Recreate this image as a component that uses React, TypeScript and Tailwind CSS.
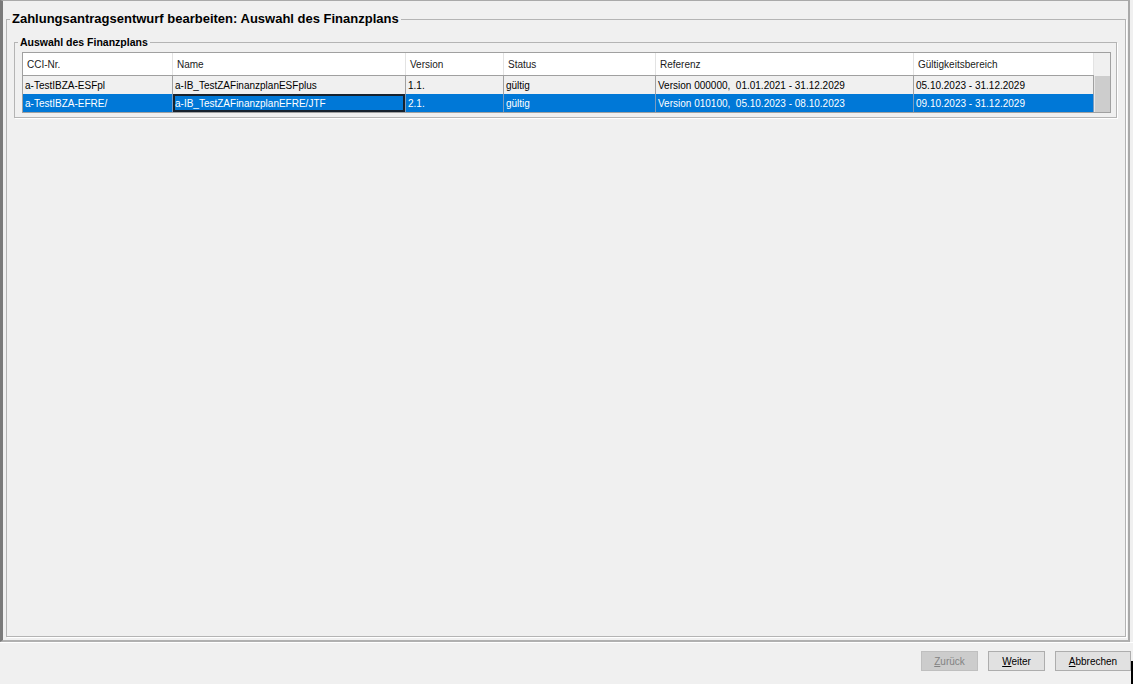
const font = "font-['Liberation_Sans',Arial,sans-serif]";

const columns = ["CCI-Nr.", "Name", "Version", "Status", "Referenz", "Gültigkeitsbereich"];

const rows = [
  ["a-TestIBZA-ESFpl", "a-IB_TestZAFinanzplanESFplus", "1.1.", "gültig", "Version 000000,  01.01.2021 - 31.12.2029", "05.10.2023 - 31.12.2029"],
  ["a-TestIBZA-EFRE/", "a-IB_TestZAFinanzplanEFRE/JTF", "2.1.", "gültig", "Version 010100,  05.10.2023 - 08.10.2023", "09.10.2023 - 31.12.2029"],
];

const gridCols = "grid grid-cols-[150px_233px_98px_152px_258px_180px]";

function FinanzplanTable() {
  return (
    <div className="flex w-[1089px] border border-[#a0a0a0] bg-white">
      <div className="flex flex-col">
        <div className={`${gridCols} h-[23px] border-b border-[#a0a0a0] bg-white`}>
          {columns.map((c) => (
            <div key={c} className="flex items-center border-r border-[#e3e3e3] pl-[4px] text-[10px] text-[#1a1a1a]">
              {c}
            </div>
          ))}
        </div>
        {rows.map((r, i) => {
          const selected = i === 1;
          return (
            <div
              key={i}
              className={`${gridCols} h-[18px] ${selected ? "bg-[#0078d7] text-white" : "bg-[#f0f0f0] text-black"}`}
            >
              {r.map((cell, j) => (
                <div
                  key={j}
                  className={`flex items-center whitespace-pre pl-[2px] text-[10px] border-r ${
                    selected ? "border-[#7a9cc0]" : "border-[#a0a0a0]"
                  } ${selected && j === 1 ? "shadow-[inset_0_0_0_2px_#17222e]" : ""}`}
                >
                  {cell}
                </div>
              ))}
            </div>
          );
        })}
      </div>
      <div className="flex w-[16px] flex-col bg-[#f0f0f0]">
        <div className="h-[23px] border-b border-[#f0f0f0]" />
        <div className="flex-1 bg-[#cdcdcd] border-l border-[#e6e6e6]" />
      </div>
    </div>
  );
}

function Button({ label, mn, disabled }: { label: string; mn: number; disabled?: boolean }) {
  return (
    <button
      className={`flex h-[20px] items-center justify-center border text-[10px] ${
        disabled ? "border-[#bfbfbf] bg-[#cccccc] text-[#838383]" : "border-[#adadad] bg-[#e1e1e1] text-black"
      } ${label === "Abbrechen" ? "w-[76px]" : "w-[57px]"}`}
    >
      <span>
        {label.slice(0, mn)}
        <span className="underline">{label.slice(mn, mn + 1)}</span>
        {label.slice(mn + 1)}
      </span>
    </button>
  );
}

export default function App() {
  return (
    <div className={`${font} flex h-[684px] w-[1133px] flex-col overflow-hidden bg-[#f0f0f0]`}>
      <div className="flex h-[642px] w-[1130px] shrink-0 flex-col border-l-[3px] border-t border-r-2 border-b-2 border-l-[#7a7a7a] border-t-[#a9a9a9] border-r-[#a9a9a9] border-b-[#b0b0b0] pl-[3px] pr-[2px] pt-[10px] pb-[3px]">
        <fieldset className="min-h-0 flex-1 border border-[#b4b4b4] pl-[3px] shadow-[1px_1px_0_#ffffff]">
          <legend className="px-[2px] text-[13px] font-bold leading-[16px] text-black">
            Zahlungsantragsentwurf bearbeiten: Auswahl des Finanzplans
          </legend>
          <fieldset className="ml-[4px] mt-[8px] w-[1103px] border border-[#b4b4b4] pl-[3px] pt-[3px] pb-[4px] shadow-[1px_1px_0_#ffffff]">
            <legend className="px-[2px] text-[10.5px] font-bold leading-[14px] text-black">Auswahl des Finanzplans</legend>
            <div className="ml-[4px]">
              <FinanzplanTable />
            </div>
          </fieldset>
        </fieldset>
      </div>
      <div className="flex min-h-0 flex-1 items-start justify-end border-t border-white pt-[8px]">
        <div className="flex items-start gap-[10px]">
          <Button label="Zurück" mn={0} disabled />
          <Button label="Weiter" mn={0} />
          <Button label="Abbrechen" mn={0} />
        </div>
        <div className="mt-[10px] h-[23px] w-[2px] bg-black" />
      </div>
    </div>
  );
}
